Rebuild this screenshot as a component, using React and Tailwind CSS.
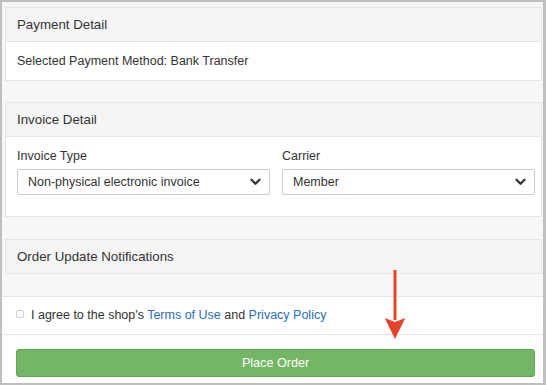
import React from "react";

function Chevron() {
  return (
    <svg width="11" height="8" viewBox="0 0 11 8" className="shrink-0">
      <path d="M1.5 1.8 L5.5 5.8 L9.5 1.8" fill="none" stroke="#333" strokeWidth="2.3" strokeLinecap="round" strokeLinejoin="round" />
    </svg>
  );
}

function Select({ value }) {
  return (
    <div className="h-[26px] flex items-center justify-between border border-[#cccccc] rounded-[2px] bg-white pl-[10px] pr-[8px] text-[12.5px] text-[#333]">
      <span>{value}</span>
      <Chevron />
    </div>
  );
}

function PanelHeader({ children }) {
  return (
    <div className="h-[34px] flex items-center px-[11px] bg-[#f5f5f5] border-b border-[#e6e6e6] text-[13.3px] text-[#333]">
      {children}
    </div>
  );
}

export default function App() {
  return (
    <div className="relative w-[546px] h-[385px] overflow-hidden flex flex-col bg-[#f7f7f9] border-t-2 border-l-2 border-b-2 border-r-[3px] border-[#bfbfbf] font-['Liberation_Sans',Arial,sans-serif] text-[12.5px] text-[#333]">
      <div className="flex flex-col pt-[5px] pl-[3px] pr-[1px]">
        <div className="border border-[#e6e6e6] bg-white">
          <PanelHeader>Payment Detail</PanelHeader>
          <div className="h-[38px] flex items-center px-[11px]">
            Selected Payment Method: Bank Transfer
          </div>
        </div>

        <div className="mt-[21px] border border-[#e6e6e6] bg-white">
          <PanelHeader>Invoice Detail</PanelHeader>
          <div className="grid grid-cols-2 gap-[12px] pl-[11px] pr-[6px] pt-[12px] pb-[21px]">
            <div className="flex flex-col gap-[5px]">
              <span className="leading-[15px]">Invoice Type</span>
              <Select value="Non-physical electronic invoice" />
            </div>
            <div className="flex flex-col gap-[5px]">
              <span className="leading-[15px]">Carrier</span>
              <Select value="Member" />
            </div>
          </div>
        </div>

        <div className="mt-[22px] border-t border-x border-[#e6e6e6] bg-white">
          <PanelHeader>Order Update Notifications</PanelHeader>
        </div>
      </div>

      <div className="mt-[22px] flex-1 flex flex-col bg-white border-t border-[#e6e6e6]">
        <div className="h-[38px] flex items-center pl-[14px] border-b border-[#e6e6e6]">
          <span className="w-[8px] h-[8px] mt-[-3px] mr-[7px] border border-[#cfcfcf] rounded-[2px] bg-white" />
          <span>
            I agree to the shop's <span className="text-[#2a6ebb]">Terms of Use</span> and{" "}
            <span className="text-[#2a6ebb]">Privacy Policy</span>
          </span>
        </div>
        <div className="pt-[14px] pl-[14px] pr-[8px]">
          <button className="w-full h-[28px] flex items-center justify-center rounded-[3px] bg-[#74b566] border border-[#5fa850] text-white text-[12.6px]">
            Place Order
          </button>
        </div>
      </div>

      <svg className="absolute left-[382px] top-[266px]" width="22" height="74" viewBox="0 0 22 74">
        <rect x="9.5" y="2" width="3" height="50" fill="#e5442b" />
        <path d="M0.7 50 L11 71 L21.3 50 L11 54 Z" fill="#e5442b" />
      </svg>
    </div>
  );
}
